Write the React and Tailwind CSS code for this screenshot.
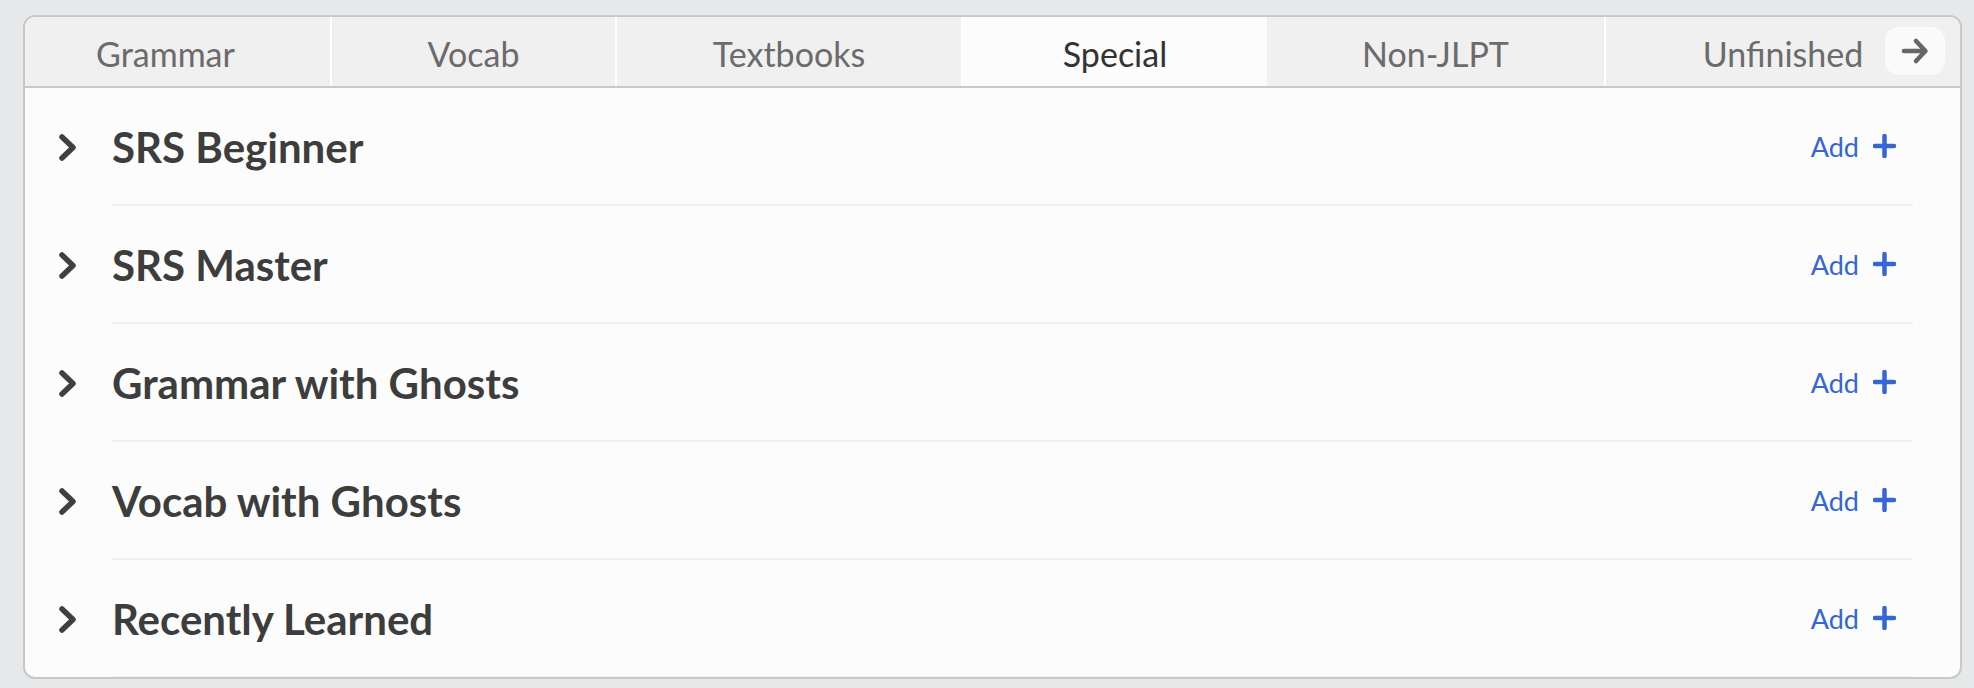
import React, { useState } from 'react';

const tabs = [
    { name: 'Grammar', width: 'w-[307px]', pad: 'pr-[24px]' },
    { name: 'Vocab', width: 'w-[285px]', pad: '' },
    { name: 'Textbooks', width: 'w-[346px]', pad: '' },
    { name: 'Special', width: 'w-[304px]', pad: '' },
    { name: 'Non-JLPT', width: 'w-[339px]', pad: '' },
    { name: 'Unfinished', width: 'w-[356px]', pad: '' },
];

const decks = ['SRS Beginner', 'SRS Master', 'Grammar with Ghosts', 'Vocab with Ghosts', 'Recently Learned'];

function Chevron() {
    return (
        <svg width="19" height="29" viewBox="0 0 19 29" fill="none">
            <path d="M4 4 L15 14.5 L4 25" stroke="#404040" strokeWidth="5.5" strokeLinecap="round" strokeLinejoin="round" />
        </svg>
    );
}

function Plus() {
    return (
        <svg width="23" height="24" viewBox="0 0 23 24" fill="none">
            <path d="M11.5 2 V22 M2 12 H21" stroke="#3566d6" strokeWidth="4.5" strokeLinecap="round" />
        </svg>
    );
}

function ArrowRight() {
    return (
        <svg width="28" height="28" viewBox="0 0 28 28" fill="none">
            <path d="M3 14 H24 M15 4 L24.5 14 L15 24" stroke="#666666" strokeWidth="4.5" strokeLinecap="round" strokeLinejoin="round" />
        </svg>
    );
}

function DeckRow({ title }) {
    return (
        <div className="flex">
            <div className="w-[87px] shrink-0 flex items-center pl-[33px] h-[118px]">
                <Chevron />
            </div>
            <div className="flex-1 mr-[47px] h-[118px] flex items-center justify-between border-b-2 border-[#f0f0f0] pr-[17px]">
                <span className="text-[42px] font-bold text-[#3d3d3d] leading-none pt-[2px]">{title}</span>
                <button className="flex items-center gap-[14px] text-[27px] text-[#3566d6] leading-none">
                    <span>Add</span>
                    <Plus />
                </button>
            </div>
        </div>
    );
}

export default function App() {
    const [active, setActive] = useState('Special');

    return (
        <div className="h-[688px] bg-[#e7e8ea] pt-[15px] overflow-hidden" style={{ fontFamily: 'Lato, "Noto Sans", sans-serif' }}>
            <div className="ml-[23px] w-[1939px] h-[664px] bg-[#fcfcfc] border-2 border-[#c8c8c8] rounded-[12px] overflow-hidden">
                <div className="relative h-[71px] bg-[#f0f0f0] border-b-2 border-[#c8c8c8]">
                    <div className="flex h-full overflow-hidden">
                        {tabs.map((tab) => (
                            <button
                                key={tab.name}
                                onClick={() => setActive(tab.name)}
                                className={`${tab.width} ${tab.pad} shrink-0 h-full flex items-center justify-center text-[34px] pt-[4px] ${active === tab.name ? 'bg-[#fcfcfc] text-[#333333]' : 'text-[#6b6b6b] border-r-2 border-white'}`}>
                                {tab.name}
                            </button>
                        ))}
                    </div>
                    <button className="absolute right-[15px] top-[10px] w-[60px] h-[48px] rounded-[14px] bg-[#fafafa] flex items-center justify-center">
                        <ArrowRight />
                    </button>
                </div>
                <div>
                    {decks.map((d) => (
                        <DeckRow key={d} title={d} />
                    ))}
                </div>
            </div>
        </div>
    );
}
